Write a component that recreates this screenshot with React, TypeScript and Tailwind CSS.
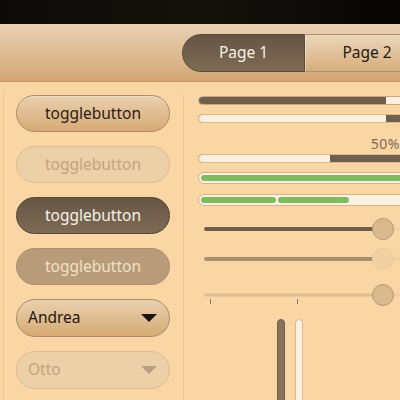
import React from "react";

const font = { fontFamily: '"Noto Sans", "Open Sans", sans-serif' };

function Btn({ kind, label }: { kind: "normal" | "disabled" | "active" | "activeDisabled"; label: string }) {
  const cls = {
    normal:
      "bg-gradient-to-b from-[#e9d0ae] to-[#d6aa74] border-[#a98b69] text-[#2a2118] shadow-[inset_0_1px_0_rgba(255,255,255,0.35)]",
    disabled: "bg-[#ecd0a8] border-[#dcbc92] text-[#c4a47e]",
    active: "bg-gradient-to-b from-[#665644] to-[#7e6b56] border-[#54463a] text-[#f7f1e8]",
    activeDisabled: "bg-[#b89c79] border-[#ad9170] text-[#f1e0c6]",
  }[kind];
  return (
    <div
      className={`shrink-0 h-[37px] w-[154px] rounded-full border flex items-center justify-center text-[15.5px] ${cls}`}
    >
      {label}
    </div>
  );
}

function Combo({ label, disabled }: { label: string; disabled?: boolean }) {
  return (
    <div
      className={`shrink-0 h-[38px] w-[154px] rounded-full border flex items-center justify-between pl-[11px] pr-[12px] text-[15.5px] ${
        disabled
          ? "bg-[#ecd0a8] border-[#dcbc92] text-[#c4a47e]"
          : "bg-gradient-to-b from-[#e9d0ae] to-[#d6aa74] border-[#a98b69] text-[#1e1811]"
      }`}
    >
      <span>{label}</span>
      <svg width="16" height="8" viewBox="0 0 16 8">
        <polygon points="0,0 16,0 8,8" fill={disabled ? "#b8a084" : "#1a140e"} />
      </svg>
    </div>
  );
}

function Slider({ track, knob, knobBorder, thick, marks }: { track: string; knob: string; knobBorder: string; thick: string; marks?: boolean }) {
  return (
    <div className="relative shrink-0 h-[24px] w-[220px]">
      <div className={`absolute left-[6px] top-1/2 -translate-y-1/2 w-[180px] rounded-full ${thick}`} style={{ background: track }} />
      <div className="absolute left-[185px] top-1/2 -translate-y-1/2 w-[40px] h-[3px] bg-[#efcf9f]" />
      <div
        className="absolute left-[174px] top-[1px] h-[22px] w-[22px] rounded-full border"
        style={{ background: knob, borderColor: knobBorder }}
      />
      {marks && (
        <>
          <div className="absolute left-[12px] top-[16px] w-[1px] h-[5px] bg-[#8d7a63]" />
          <div className="absolute left-[99px] top-[16px] w-[1px] h-[5px] bg-[#8d7a63]" />
        </>
      )}
    </div>
  );
}

export default function App() {
  return (
    <div className="w-[400px] h-[400px] overflow-hidden bg-[#f9d6a4] relative" style={font}>
      <div className="h-[24px] bg-gradient-to-r from-[#0c0a08] via-[#15110d] to-[#070605]" />
      <div className="h-[58px] bg-gradient-to-b from-[#e9d2b4] to-[#d3a672] border-b border-[#bf996c] flex">
        <div className="ml-[182px] mt-[10px] flex h-[38px] shrink-0">
          <div className="shrink-0 w-[123px] h-[38px] rounded-l-full border border-[#5b4c3c] bg-gradient-to-b from-[#655543] to-[#7e6b56] text-[#f7f1e8] text-[15.5px] flex items-center justify-center">
            Page 1
          </div>
          <div className="shrink-0 w-[125px] h-[38px] border border-l-0 border-[#b09170] bg-gradient-to-b from-[#ecd7bb] to-[#d7ad7a] text-[#241c14] text-[15.5px] flex items-center justify-center shadow-[inset_1px_0_0_rgba(255,255,255,0.35)]">
            Page 2
          </div>
        </div>
      </div>
      <div className="flex h-[318px]">
        <div className="w-[3px] shrink-0" />
        <div className="shrink-0 border-l border-[#eac796] mt-[8px] pl-[12px] pr-[13px] pt-[5px] flex flex-col gap-[14px]">
          <Btn kind="normal" label="togglebutton" />
          <Btn kind="disabled" label="togglebutton" />
          <Btn kind="active" label="togglebutton" />
          <Btn kind="activeDisabled" label="togglebutton" />
          <Combo label="Andrea" />
          <Combo label="Otto" disabled />
        </div>
        <div className="shrink-0 border-l border-[#eac796] mt-[12px]" />
        <div className="shrink-0 pl-[14px] pt-[14px] flex flex-col">
          <div className="shrink-0 h-[9px] w-[230px] rounded-full border border-[#c9a67b] bg-[#fdf0e0] overflow-hidden flex">
            <div className="w-[187px] h-full bg-[#6f5f4c]" />
          </div>
          <div className="shrink-0 mt-[9px] h-[9px] w-[230px] rounded-full border border-[#dcb98e] bg-[#6f5f4c] overflow-hidden flex">
            <div className="w-[187px] h-full bg-[#fdf0e0]" />
          </div>
          <div className="shrink-0 mt-[11px] h-[19px] w-[202px] text-right text-[14px] text-[#7d6c59] leading-[19px] tracking-[0.5px]">
            50%
          </div>
          <div className="shrink-0 mt-[1px] h-[9px] w-[230px] rounded-full border border-[#dcb98e] bg-[#6f5f4c] overflow-hidden flex">
            <div className="w-[131px] h-full bg-[#fdf0e0]" />
          </div>
          <div className="shrink-0 mt-[9px] h-[12px] w-[230px] rounded-full border border-[#d6b287] bg-[#fdf0e0] p-[2px] flex">
            <div className="flex-1 h-full rounded-full bg-[#7fba5d]" />
          </div>
          <div className="shrink-0 mt-[10px] h-[12px] w-[230px] rounded-full border border-[#d6b287] bg-[#fdf0e0] p-[2px] flex gap-[2px]">
            <div className="w-[75px] h-full rounded-full bg-[#7fba5d]" />
            <div className="w-[71px] h-full rounded-full bg-[#7fba5d]" />
          </div>
          <div className="shrink-0 mt-[11px] flex flex-col gap-[6px]">
            <Slider track="#6f5f4c" knob="#d9b98e" knobBorder="#b99a75" thick="h-[4px]" />
            <Slider track="#a8916f" knob="#f1d0a2" knobBorder="#ecca9a" thick="h-[4px]" />
            <div className="mt-[6px]">
              <Slider track="#dcbc92" knob="#d9b98e" knobBorder="#b99a75" thick="h-[3px]" marks />
            </div>
          </div>
          <div className="shrink-0 mt-[12px] ml-[79px] flex gap-[10px]">
            <div className="w-[8px] h-[100px] rounded-full bg-[#87735c] border border-[#75624e]" />
            <div className="w-[8px] h-[100px] rounded-full bg-[#fdf0e0] border border-[#dcb98e]" />
          </div>
        </div>
      </div>
    </div>
  );
}
